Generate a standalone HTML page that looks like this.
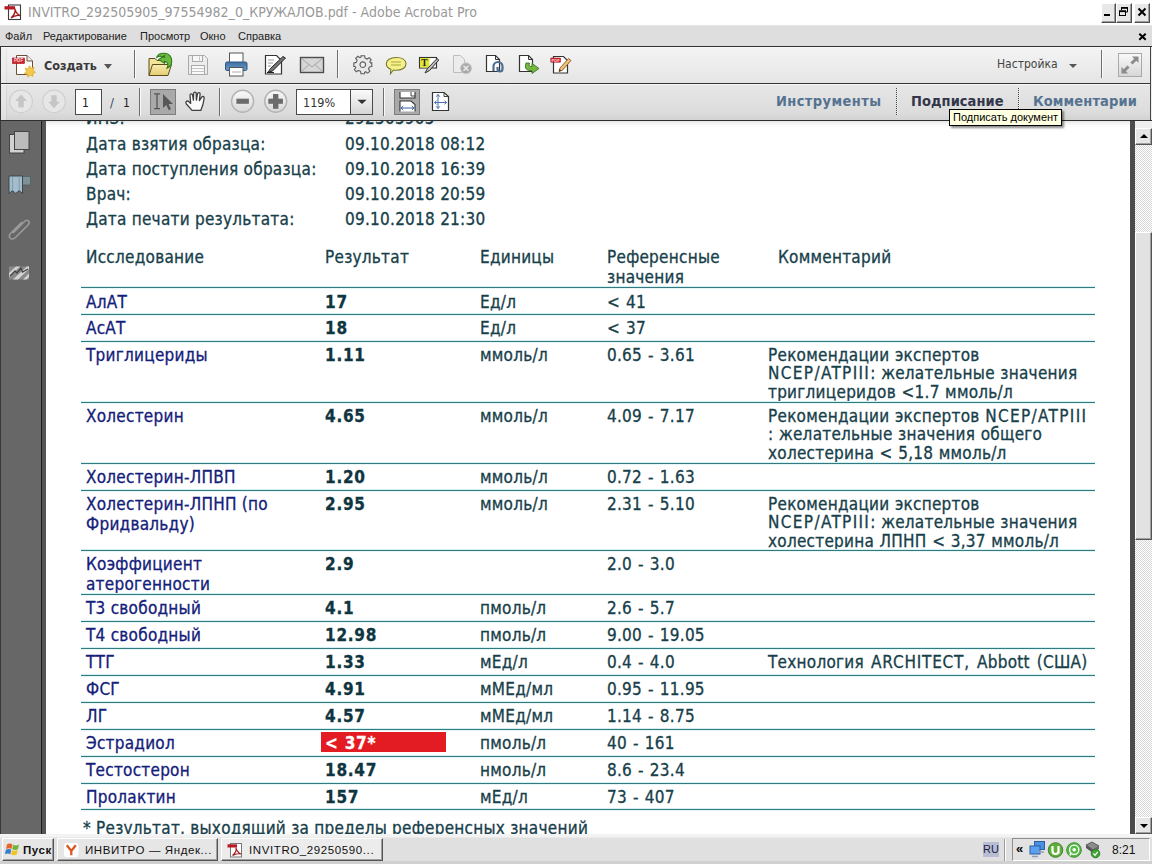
<!DOCTYPE html>
<html lang="ru">
<head>
<meta charset="utf-8">
<title>INVITRO_292505905_97554982_0_КРУЖАЛОВ.pdf - Adobe Acrobat Pro</title>
<style>
html,body{margin:0;padding:0;}
body{width:1152px;height:864px;overflow:hidden;position:relative;background:#fff;font-family:"Liberation Sans","DejaVu Sans",sans-serif;}
.abs{position:absolute;white-space:nowrap;}
#titlebar{position:absolute;left:0;top:0;width:1152px;height:25px;background:#fff;}
#title{left:28px;top:4px;font-size:14px;color:#999;font-family:"DejaVu Sans Condensed","Liberation Sans",sans-serif;}
#menubar{position:absolute;left:0;top:25px;width:1152px;height:21px;background:#dedede;border-top:1px solid #e6e6e6;box-sizing:border-box;}
.menu{font-size:11px;color:#222;top:4px;font-family:"Liberation Sans",sans-serif;}
#tb1{position:absolute;left:0;top:46px;width:1152px;height:37px;background:linear-gradient(#f4f4f4,#e5e5e5);border-top:1px solid #333;box-sizing:border-box;border-left:1px solid #333;box-shadow:inset 0 1px 0 #f8f8f8,inset 5px 0 0 rgba(255,255,255,.4),inset 6px 0 0 rgba(0,0,0,.05);}
#tb2{position:absolute;left:0;top:83px;width:1152px;height:37px;background:linear-gradient(#e7e7e7 0%,#dcdcdc 80%,#d2d2d2 100%);border-top:1px solid #333;box-sizing:border-box;border-left:1px solid #333;box-shadow:inset 0 1px 0 #f8f8f8,inset 5px 0 0 rgba(255,255,255,.4),inset 6px 0 0 rgba(0,0,0,.05);}
#docarea{position:absolute;left:0;top:120px;width:1152px;height:714px;background:#676767;border-top:1px solid #2e2e2e;box-sizing:border-box;overflow:hidden;}
#sideline{position:absolute;left:40px;top:0;width:6px;height:716px;background:linear-gradient(90deg,#6a6a6a 0 0.6px,#d4d4d4 0.6px 1.3px,#1c1c1c 1.3px 2.2px,#555 2.2px 6px);}
#page{position:absolute;left:46px;top:0px;width:1089px;height:715px;background:#fff;overflow:hidden;}
#scroll{position:absolute;left:1135px;top:0;width:17px;height:716px;background:#e9e9e9;}
#taskbar{position:absolute;left:0;top:834px;width:1152px;height:30px;background:linear-gradient(#f3f3f3 0 3px,#e0e0e0 4px 27px,#d0d0d0 27px 30px);}
.doc{font-family:"DejaVu Sans Condensed","Liberation Sans",sans-serif;font-size:17px;letter-spacing:0.25px;color:#17404a;line-height:20px;-webkit-text-stroke:0.3px currentColor;}
.nm{color:#13207a;}
.b{font-weight:bold;color:#0f3540;letter-spacing:0.75px;margin-left:0;}
.red{color:#fff;}
.rf{word-spacing:0.9px;}
.w{letter-spacing:1.35px;}
.w2{letter-spacing:0.8px;}
.cm{word-spacing:0.4px;}
.ws2{word-spacing:2px;}
.redbox{position:absolute;width:125px;height:20px;background:#e31b23;}
.hl{position:absolute;left:35px;width:1014px;height:1px;background:#347880;box-shadow:0 -1px 0 #d3f0f3,0 1px 0 #e6f7f8;}

.sep{position:absolute;width:1px;background:#6e6e6e;box-shadow:1px 0 0 #fafafa;}
.dsep{position:absolute;width:0;border-left:1px dotted #444;border-right:1px dotted #f6f6f6;}
.ico{position:absolute;overflow:visible;}
#create{left:44px;top:58px;font-size:12.5px;font-weight:bold;color:#3a3a3a;font-family:"DejaVu Sans Condensed","Liberation Sans",sans-serif;}
.tri{position:absolute;width:0;height:0;border-left:4px solid transparent;border-right:4px solid transparent;border-top:5px solid #555;}
#nastr{left:997px;top:57px;font-size:12px;color:#444;font-family:"DejaVu Sans Condensed","Liberation Sans",sans-serif;}
.pane{top:93px;font-size:14.5px;font-weight:bold;color:#557391;font-family:"DejaVu Sans Condensed","Liberation Sans",sans-serif;}
#tip{position:absolute;left:949px;top:109px;width:108px;height:15px;background:#ffffe1;border:1px solid #000;box-shadow:2px 2px 2px rgba(0,0,0,.45);font-size:11px;line-height:15px;color:#000;padding-left:3px;box-sizing:content-box;white-space:nowrap;font-family:"Liberation Sans",sans-serif;}
.inp{position:absolute;background:#fff;border:1px solid #4a4a4a;box-sizing:border-box;}
.actbtn{position:absolute;background:#a9a9a9;border:1px solid #7c7c7c;box-sizing:border-box;}
.tbt{font-size:13px;color:#222;font-family:"DejaVu Sans Condensed","Liberation Sans",sans-serif;}

.wbtn{position:absolute;top:3px;height:20px;background:#e8e8e8;box-sizing:border-box;border:1px solid;border-color:#fff #4e4e4e #4e4e4e #fff;box-shadow:inset -1px -1px 0 #9c9c9c;}

#rbar{position:absolute;left:1130px;top:0;width:5px;height:716px;background:#4c4c4c;}
#scroll{background:repeating-conic-gradient(#ffffff 0% 25%,#d6d6d6 0% 50%) 0 0/2px 2px;}
.sbtn{position:absolute;left:0;width:17px;height:17px;background:#e6e6e6;box-sizing:border-box;border:1px solid;border-color:#fff #555 #555 #fff;box-shadow:inset -1px -1px 0 #a0a0a0;}
#thumb{position:absolute;left:0;top:111px;width:17px;height:308px;background:#e2e2e2;box-sizing:border-box;border:1px solid;border-color:#fff #555 #555 #fff;box-shadow:inset -1px -1px 0 #a0a0a0;}
.arr{position:absolute;left:4px;width:0;height:0;border-left:4px solid transparent;border-right:4px solid transparent;}
.tbtn{position:absolute;top:4px;height:23px;background:#e6e6e6;box-sizing:border-box;border:1px solid;border-color:#fff #555 #555 #fff;box-shadow:inset -1px -1px 0 #a0a0a0;font-size:11.5px;letter-spacing:0.6px;color:#111;white-space:nowrap;overflow:hidden;font-family:"Liberation Sans",sans-serif;}
.tbtn span{position:absolute;top:5px;}
</style>
</head>
<body>
<div id="titlebar">
    <svg class="ico" style="left:0;top:0" width="30" height="25" viewBox="0 0 30 25">
    <rect x="8.500" y="5" width="12" height="14.500" fill="#fff" stroke="#3c3c3c" stroke-width="1.100"/>
    <path d="M11 18 C14 15.500 15.500 11.500 15 8.500 C14.800 10.500 17 14.500 20 15.500 C17 15 13.500 16 11 18 Z" fill="none" stroke="#a3161c" stroke-width="1.300"/>
    <rect x="4.500" y="6.200" width="10.500" height="3.300" fill="#b81a22"/>
  </svg>
  <div class="wbtn" style="left:1101px;width:15px"></div>
  <div class="wbtn" style="left:1116px;width:16px"></div>
  <div class="wbtn" style="left:1134px;width:16px"></div>
  <svg class="ico" style="left:1100px;top:0" width="52" height="25" viewBox="1100 0 52 25">
    <rect x="1104" y="14" width="6" height="2" fill="#000"/>
    <path d="M1121.500 10 V7.500 H1127.500 V12 H1125.500" fill="none" stroke="#000" stroke-width="1"/>
    <path d="M1121 8 H1128" stroke="#000" stroke-width="1.600"/>
    <rect x="1119.500" y="11" width="6" height="4.500" fill="none" stroke="#000" stroke-width="1"/>
    <path d="M1119 11.300 H1126" stroke="#000" stroke-width="1.600"/>
    <path d="M1138.500 8.500 L1145.500 15.500 M1145.500 8.500 L1138.500 15.500" stroke="#000" stroke-width="2"/>
  </svg>
  <div class="abs" id="title">INVITRO_292505905_97554982_0_КРУЖАЛОВ.pdf - Adobe Acrobat Pro</div>
</div>
<div id="menubar">
  <div class="abs menu" style="left:5px">Файл</div>
  <div class="abs menu" style="left:43px">Редактирование</div>
  <div class="abs menu" style="left:140px">Просмотр</div>
  <div class="abs menu" style="left:200px">Окно</div>
  <div class="abs menu" style="left:238px">Справка</div>
  <svg class="ico" style="left:1136px;top:5px" width="12" height="12" viewBox="0 0 12 12"><path d="M3.300 2.800 L9.700 8.800 M9.700 2.800 L3.300 8.800" stroke="#000" stroke-width="2"/></svg>
</div>
<div id="tb1"></div>
<div id="tb2"></div>
<div id="docarea">
  <svg class="ico" style="left:0;top:0" width="46" height="180" viewBox="0 120 46 180">
    <rect x="9.500" y="133.500" width="14.500" height="18.500" fill="#d2d2d2" stroke="#444" stroke-width="1"/>
    <rect x="14.500" y="130.500" width="14.500" height="18" fill="#bcbcbc" stroke="#444" stroke-width="1"/>
    <path d="M20 175.500 H30.500 V184 H20 Z" fill="#7d9294" stroke="#4f5f62" stroke-width="0.800"/>
    <path d="M9 175 H22.500 V192.500 L19.200 189.500 L15.800 192.500 L12.400 189.500 L9 192.500 Z" fill="#a4bccb" stroke="#2f3e4c" stroke-width="0.900"/>
    <path d="M12.600 176 V189.500 M19.200 176 V189.500" stroke="#7f95a6" stroke-width="0.900"/>
    <path d="M13 232 L24.500 220.500 C27.500 217.500 31 221 28 224 L15.500 236.500 C11.500 240.500 7 236 11 232 L22 221" fill="none" stroke="#9a9a9a" stroke-width="1.600"/>
    <path d="M9 265.500 H29 V278.500 H9 Z" fill="#8a8a8a"/>
    <path d="M9 272 L16 265.500 H20 L9 276 Z M13 278.500 L27 265.500 H29 V268 L18 278.500 Z M23 278.500 L29 272.500 V276 L26.500 278.500 Z" fill="#d4d4d4"/>
    <path d="M10 275 L15 270 L17 272 L21 267 L22.500 271 L28 268" fill="none" stroke="#444" stroke-width="1.300"/>
  </svg>
  <div style="position:absolute;left:0;top:0;width:1px;height:716px;background:#3a3a3a"></div>
  <div id="sideline"></div>
  <div id="page">
<div style="position:absolute;left:0;top:0;width:1089px;height:6px;background:linear-gradient(#e6e6e6,#f4f4f4 40%,#fff)"></div>
<div class="abs doc" style="left:40px;top:-13px">ИНЗ:</div>
<div class="abs doc" style="left:299px;top:-13px">292505905</div>
<div class="abs doc" style="left:40px;top:13px">Дата взятия образца:</div>
<div class="abs doc" style="left:299px;top:13px">09.10.2018 08:12</div>
<div class="abs doc" style="left:40px;top:38px">Дата поступления образца:</div>
<div class="abs doc" style="left:299px;top:38px">09.10.2018 16:39</div>
<div class="abs doc" style="left:40px;top:63px">Врач:</div>
<div class="abs doc" style="left:299px;top:63px">09.10.2018 20:59</div>
<div class="abs doc" style="left:40px;top:88px">Дата печати результата:</div>
<div class="abs doc" style="left:299px;top:88px">09.10.2018 21:30</div>
<div class="abs doc" style="left:40px;top:126px">Исследование</div>
<div class="abs doc" style="left:279px;top:126px">Результат</div>
<div class="abs doc" style="left:434px;top:126px">Единицы</div>
<div class="abs doc" style="left:561px;top:126px">Референсные</div>
<div class="abs doc" style="left:561px;top:146px">значения</div>
<div class="abs doc" style="left:732px;top:126px">Комментарий</div>
<div class="hl" style="top:166px"></div>
<div class="abs doc nm" style="left:40px;top:171px">АлАТ</div>
<div class="abs doc b" style="left:279px;top:171px">17</div>
<div class="abs doc" style="left:434px;top:171px">Ед/л</div>
<div class="abs doc rf" style="left:561px;top:171px">&lt; 41</div>
<div class="hl" style="top:193px"></div>
<div class="abs doc nm" style="left:40px;top:197px">АсАТ</div>
<div class="abs doc b" style="left:279px;top:197px">18</div>
<div class="abs doc" style="left:434px;top:197px">Ед/л</div>
<div class="abs doc rf" style="left:561px;top:197px">&lt; 37</div>
<div class="hl" style="top:220px"></div>
<div class="abs doc nm" style="left:40px;top:224px">Триглицериды</div>
<div class="abs doc b" style="left:279px;top:224px">1.11</div>
<div class="abs doc" style="left:434px;top:224px">ммоль/л</div>
<div class="abs doc rf" style="left:561px;top:224px">0.65 - 3.61</div>
<div class="abs doc cm" style="left:722px;top:224px">Рекомендации экспертов</div>
<div class="abs doc cm" style="left:722px;top:242.3px"><span class="w">NCEP/ATPIII</span>: желательные значения</div>
<div class="abs doc cm" style="left:722px;top:260.6px">триглицеридов &lt;1.7 ммоль/л</div>
<div class="hl" style="top:281px"></div>
<div class="abs doc nm" style="left:40px;top:285px">Холестерин</div>
<div class="abs doc b" style="left:279px;top:285px">4.65</div>
<div class="abs doc" style="left:434px;top:285px">ммоль/л</div>
<div class="abs doc rf" style="left:561px;top:285px">4.09 - 7.17</div>
<div class="abs doc cm" style="left:722px;top:285px">Рекомендации экспертов <span class="w">NCEP/ATPIII</span></div>
<div class="abs doc cm" style="left:722px;top:303.3px">: желательные значения общего</div>
<div class="abs doc cm" style="left:722px;top:321.6px">холестерина &lt; 5,18 ммоль/л</div>
<div class="hl" style="top:342px"></div>
<div class="abs doc nm" style="left:40px;top:346px">Холестерин-ЛПВП</div>
<div class="abs doc b" style="left:279px;top:346px">1.20</div>
<div class="abs doc" style="left:434px;top:346px">ммоль/л</div>
<div class="abs doc rf" style="left:561px;top:346px">0.72 - 1.63</div>
<div class="hl" style="top:369px"></div>
<div class="abs doc nm" style="left:40px;top:373px">Холестерин-ЛПНП (по</div>
<div class="abs doc nm" style="left:40px;top:393px">Фридвальду)</div>
<div class="abs doc b" style="left:279px;top:373px">2.95</div>
<div class="abs doc" style="left:434px;top:373px">ммоль/л</div>
<div class="abs doc rf" style="left:561px;top:373px">2.31 - 5.10</div>
<div class="abs doc cm" style="left:722px;top:373px">Рекомендации экспертов</div>
<div class="abs doc cm" style="left:722px;top:391.3px"><span class="w">NCEP/ATPIII</span>: желательные значения</div>
<div class="abs doc cm" style="left:722px;top:409.6px">холестерина ЛПНП &lt; 3,37 ммоль/л</div>
<div class="hl" style="top:429px"></div>
<div class="abs doc nm" style="left:40px;top:433px">Коэффициент</div>
<div class="abs doc nm" style="left:40px;top:453px">атерогенности</div>
<div class="abs doc b" style="left:279px;top:433px">2.9</div>
<div class="abs doc rf" style="left:561px;top:433px">2.0 - 3.0</div>
<div class="hl" style="top:473px"></div>
<div class="abs doc nm" style="left:40px;top:477px">Т3 свободный</div>
<div class="abs doc b" style="left:279px;top:477px">4.1</div>
<div class="abs doc" style="left:434px;top:477px">пмоль/л</div>
<div class="abs doc rf" style="left:561px;top:477px">2.6 - 5.7</div>
<div class="hl" style="top:500px"></div>
<div class="abs doc nm" style="left:40px;top:504px">Т4 свободный</div>
<div class="abs doc b" style="left:279px;top:504px">12.98</div>
<div class="abs doc" style="left:434px;top:504px">пмоль/л</div>
<div class="abs doc rf" style="left:561px;top:504px">9.00 - 19.05</div>
<div class="hl" style="top:527px"></div>
<div class="abs doc nm" style="left:40px;top:531px">ТТГ</div>
<div class="abs doc b" style="left:279px;top:531px">1.33</div>
<div class="abs doc" style="left:434px;top:531px">мЕд/л</div>
<div class="abs doc rf" style="left:561px;top:531px">0.4 - 4.0</div>
<div class="abs doc cm ws2" style="left:722px;top:531px">Технология <span class="w2">ARCHITECT,</span> Abbott (США)</div>
<div class="hl" style="top:554px"></div>
<div class="abs doc nm" style="left:40px;top:558px">ФСГ</div>
<div class="abs doc b" style="left:279px;top:558px">4.91</div>
<div class="abs doc" style="left:434px;top:558px">мМЕд/мл</div>
<div class="abs doc rf" style="left:561px;top:558px">0.95 - 11.95</div>
<div class="hl" style="top:581px"></div>
<div class="abs doc nm" style="left:40px;top:585px">ЛГ</div>
<div class="abs doc b" style="left:279px;top:585px">4.57</div>
<div class="abs doc" style="left:434px;top:585px">мМЕд/мл</div>
<div class="abs doc rf" style="left:561px;top:585px">1.14 - 8.75</div>
<div class="hl" style="top:608px"></div>
<div class="abs doc nm" style="left:40px;top:612px">Эстрадиол</div>
<div class="redbox" style="left:275px;top:611px"></div>
<div class="abs doc b red" style="left:279px;top:612px">&lt; 37*</div>
<div class="abs doc" style="left:434px;top:612px">пмоль/л</div>
<div class="abs doc rf" style="left:561px;top:612px">40 - 161</div>
<div class="hl" style="top:635px"></div>
<div class="abs doc nm" style="left:40px;top:639px">Тестостерон</div>
<div class="abs doc b" style="left:279px;top:639px">18.47</div>
<div class="abs doc" style="left:434px;top:639px">нмоль/л</div>
<div class="abs doc rf" style="left:561px;top:639px">8.6 - 23.4</div>
<div class="hl" style="top:662px"></div>
<div class="abs doc nm" style="left:40px;top:666px">Пролактин</div>
<div class="abs doc b" style="left:279px;top:666px">157</div>
<div class="abs doc" style="left:434px;top:666px">мЕд/л</div>
<div class="abs doc rf" style="left:561px;top:666px">73 - 407</div>
<div class="hl" style="top:688px"></div>
<div class="abs doc" style="left:37px;top:697px">* Результат, выходящий за пределы референсных значений</div>
</div>
  <div id="rbar"></div>
  <div id="scroll">
    <div style="position:absolute;left:0;top:0;width:17px;height:7px;background:#efefef"></div>
    <div class="sbtn" style="top:7px"><div class="arr" style="top:5px;border-bottom:4px solid #000"></div></div>
    <div id="thumb"></div>
    <div class="sbtn" style="top:696px"><div class="arr" style="top:6px;border-top:4px solid #000"></div></div>
  </div>
</div>
<div id="taskbar">
  <div class="tbtn" style="left:2px;width:52px;font-weight:bold"><span style="left:20px">Пуск</span>
    <svg class="ico" style="left:2px;top:2px" width="16" height="16" viewBox="0 0 16 16">
      <path d="M2 3.500 C4 2 6 2.500 7.500 3.500 L6.500 8 C5 7 3 6.800 1 8 Z" fill="#e8632a"/>
      <path d="M8.300 3.800 C10 4.800 12 4.800 14 3.500 L13 8 C11 9.300 9 9 7.300 8.300 Z" fill="#6fb536"/>
      <path d="M0.800 8.800 C3 7.600 5 8 6.300 8.800 L5.300 13.300 C4 12.300 2 12.200 0 13.300 Z" fill="#3a7cc4"/>
      <path d="M7.100 9.200 C9 10 11 10 12.800 8.800 L11.800 13.300 C10 14.500 8 14.300 6.100 13.600 Z" fill="#f0c424"/>
    </svg>
  </div>
  <div class="tbtn" style="left:57px;width:161px"><span style="left:27px">ИНВИТРО — Яндек...</span>
    <svg class="ico" style="left:5px;top:3px" width="17" height="16" viewBox="0 0 17 16">
      <rect x="0.500" y="0.500" width="15.500" height="15" rx="3" fill="#fff" stroke="#e4e4ec" stroke-width="1"/>
      <path d="M3.800 3.300 L8.300 9 L12.800 3.300 M8.300 9 V13.300" fill="none" stroke="#dd5522" stroke-width="2.300"/>
    </svg>
  </div>
  <div class="tbtn" style="left:221px;width:162px;background:#ececec"><span style="left:27px">INVITRO_29250590...</span>
    <svg class="ico" style="left:4px;top:2px" width="18" height="18" viewBox="0 0 18 18">
      <rect x="4.500" y="2.500" width="11" height="13.500" fill="#fff" stroke="#777" stroke-width="1"/>
      <path d="M6.500 14.500 C9 12.500 10.500 9 10 6.500 C10 8.500 12 12 15 13 C12.500 12.500 9 13 6.500 14.500 Z" fill="none" stroke="#a3161c" stroke-width="1.100"/>
      <rect x="1.500" y="3.300" width="9.500" height="3.200" fill="#b81a22"/>
    </svg>
  </div>
  <div style="position:absolute;left:983px;top:8px;width:16px;height:15px;background:#b9bdd2;font-size:11px;line-height:15px;text-align:center;color:#1a1f4a;font-family:'Liberation Sans',sans-serif">RU</div>
  <div style="position:absolute;left:1004px;top:5px;width:1px;height:22px;background:#9a9a9a;box-shadow:1px 0 0 #fff"></div>
  <div style="position:absolute;left:1012px;top:4px;width:138px;height:23px;box-sizing:border-box;border:1px solid;border-color:#8e8e8e #fff #fff #8e8e8e;background:#e2e2e2"></div>
  <div class="abs" style="left:1016px;top:7px;font-size:13px;font-weight:bold;color:#000;font-family:'Liberation Sans',sans-serif">«</div>
  <svg class="ico" style="left:1028px;top:5px" width="76" height="20" viewBox="1028 839 76 20">
    <!-- network -->
    <rect x="1034.500" y="841.500" width="10" height="8" fill="#4a8fe0" stroke="#2a5fa8" stroke-width="1"/>
    <rect x="1030" y="846" width="10" height="8" fill="#5aa0ee" stroke="#2a5fa8" stroke-width="1"/>
    <path d="M1032 856.500 H1038 M1038 852 H1044" stroke="#8fa0b4" stroke-width="1.500"/>
    <!-- utorrent -->
    <circle cx="1055.500" cy="850" r="7.300" fill="#5fae3c" stroke="#3e8526" stroke-width="1"/>
    <path d="M1052.500 846 V851 C1052.500 855 1058.500 855 1058.500 851 V846 M1058.500 853.500 V851" fill="none" stroke="#fff" stroke-width="2.200"/>
    <!-- whatsapp -->
    <circle cx="1074" cy="850" r="7.300" fill="#58b845" stroke="#3e8f2e" stroke-width="1"/>
    <circle cx="1074.200" cy="849.700" r="4.600" fill="none" stroke="#fff" stroke-width="1.300"/>
    <path d="M1070 855.500 L1071 852.500" stroke="#fff" stroke-width="1.500"/>
    <circle cx="1074.200" cy="849.700" r="1.800" fill="#fff"/>
    <!-- safely remove -->
    <path d="M1086 845 L1092 842 L1099 846 L1093 850 Z" fill="#8c8c8c" stroke="#444" stroke-width="0.800"/>
    <path d="M1086 845 V848 L1093 853 V850 Z" fill="#555"/>
    <path d="M1093 850 L1099 846 V849 L1093 853 Z" fill="#6e6e6e"/>
    <circle cx="1095.500" cy="853.500" r="4.300" fill="#3fa535" stroke="#24701e" stroke-width="0.800"/>
    <path d="M1093.500 853.500 L1095 855.300 L1097.700 851.800" fill="none" stroke="#fff" stroke-width="1.300"/>
  </svg>
  <div class="abs" style="left:1112px;top:9px;font-size:12px;color:#111;font-family:'Liberation Sans',sans-serif">8:21</div>
</div>
<div id="ui">
<!-- toolbar 1 -->
<div class="abs" id="create">Создать</div>
<div class="tri" style="left:104px;top:64px"></div>
<div class="sep" style="left:134px;top:50px;height:28px"></div>
<div class="sep" style="left:337px;top:50px;height:28px"></div>
<div class="abs" id="nastr">Настройка</div>
<div class="tri" style="left:1069px;top:64px;border-left-width:4px;border-right-width:4px;border-top-width:4px"></div>
<div class="sep" style="left:1101px;top:50px;height:28px"></div>
<!-- toolbar 2 -->
<div class="inp" style="left:75px;top:89px;width:27px;height:26px"></div>
<div class="abs tbt" style="left:82px;top:96px;font-size:12px">1</div>
<div class="abs tbt" style="left:110px;top:95px;color:#446">/</div>
<div class="abs tbt" style="left:123px;top:96px;font-size:12px">1</div>
<div class="sep" style="left:139px;top:88px;height:28px"></div>
<div class="actbtn" style="left:150px;top:89px;width:26px;height:26px"></div>
<div class="sep" style="left:219px;top:88px;height:28px"></div>
<div class="inp" style="left:296px;top:89px;width:77px;height:26px"></div>
<div class="abs tbt" style="left:303px;top:95px;font-size:12.5px;color:#333">119%</div>
<div class="sep" style="left:383px;top:88px;height:28px"></div>
<div class="actbtn" style="left:394px;top:89px;width:26px;height:26px"></div>
<div class="abs pane" style="left:776px;letter-spacing:0.4px">Инструменты</div>
<div class="dsep" style="left:896px;top:88px;height:27px"></div>
<div class="abs pane" style="left:911px;color:#33364a;letter-spacing:0.05px">Подписание</div>
<div class="dsep" style="left:1018px;top:88px;height:27px"></div>
<div class="abs pane" style="left:1033px;letter-spacing:0.1px">Комментарии</div>
<!--ICONS-->
<svg class="ico" style="left:0;top:0" width="1152" height="130" viewBox="0 0 1152 130">
<defs>
<linearGradient id="gbtn" x1="0" y1="0" x2="0" y2="1"><stop offset="0" stop-color="#fafafa"/><stop offset="1" stop-color="#d6d6d6"/></linearGradient>
<linearGradient id="gfold" x1="0" y1="0" x2="0" y2="1"><stop offset="0" stop-color="#f8ecb0"/><stop offset="1" stop-color="#e4cc70"/></linearGradient>
<linearGradient id="gblue" x1="0" y1="0" x2="0" y2="1"><stop offset="0" stop-color="#3f6f9f"/><stop offset="1" stop-color="#6a9ccc"/></linearGradient>
</defs>
<!-- create icon -->
<g>
<path d="M16.5 55.5 H27 L32.5 61 V74.5 H16.5 Z" fill="#fff" stroke="#6b4f3a" stroke-width="1"/>
<path d="M27 55.5 V61 H32.5" fill="#eee" stroke="#6b4f3a" stroke-width="1"/>
<rect x="12.5" y="58" width="12" height="5.5" fill="#d2232a" stroke="#a01018" stroke-width="0.6"/>
<text x="14" y="62.400" font-family="Liberation Sans,sans-serif" font-weight="bold" font-size="4.600" fill="#f6d4d4">PDF</text>
<path d="M29.5 65.5 l1.6 2.6 3 -0.6 -0.8 3 2.4 1.9 -2.8 1.2 0.1 3 -2.8 -1.3 -2.3 2 -0.6 -3 -3 -0.8 2 -2.3 -1.2 -2.8 3 0.3z" fill="#f2c94c" stroke="#d9a520" stroke-width="0.6"/>
</g>
<!-- open folder -->
<g>
<path d="M149 75.5 V58.5 H155 L157 60.5 H164 V63" fill="#f3e29a" stroke="#5c4b1e" stroke-width="1"/>
<path d="M149 75.5 L152.5 64.5 H171.5 L168 75.5 Z" fill="url(#gfold)" stroke="#5c4b1e" stroke-width="1"/>
<path d="M156.800 57.200 C158.500 52.300 168.500 51.300 171.200 58 C173 63 170.800 67 167 68.300 C168.800 64.500 168 61.800 164.500 61.300 L164.500 63.300 L158.800 59.600 L164.500 55.600 L164.500 57.400 C161 55.800 158.500 56.200 156.800 57.200 Z" fill="#6dbb3e" stroke="#2f7a1e" stroke-width="1.100"/>
</g>
<!-- floppy disabled -->
<g fill="none" stroke="#a9a9a9" stroke-width="1">
<path d="M188.500 55.500 H204.500 L207.500 58.500 V74.500 H188.500 Z" fill="#ececec"/>
<rect x="192.500" y="55.500" width="10" height="6" fill="#f6f6f6"/>
<rect x="191.500" y="65.500" width="13" height="9" fill="#f9f9f9"/>
<path d="M199.500 56.500 V60.500 M192 68.500 H204 M192 71.500 H204" stroke="#c4c4c4"/>
</g>
<!-- printer -->
<g>
<rect x="229.500" y="53" width="13.500" height="9.500" fill="#fdfdfd" stroke="#555" stroke-width="1"/>
<rect x="225.500" y="62" width="21.500" height="8.500" rx="1.500" fill="url(#gblue)" stroke="#2f5884" stroke-width="1"/>
<rect x="229.500" y="67.500" width="13.500" height="8.500" fill="#fff" stroke="#555" stroke-width="1"/>
<path d="M232 72 H241" stroke="#aaa" stroke-width="1"/>
</g>
<!-- edit page -->
<g>
<path d="M265.500 55.500 H276.500 L281.500 60.500 V74 H265.500 Z" fill="#fff" stroke="#333" stroke-width="1.200"/>
<path d="M268 60 H274 M268 63 H273 M268 66 H271" stroke="#999" stroke-width="1"/>
<path d="M285.500 58 L283 56.500 L270.500 68.500 L268 72.500 L272.500 71 Z" fill="#777" stroke="#222" stroke-width="1"/>
<path d="M267 72.500 H274" stroke="#222" stroke-width="1.200"/>
</g>
<!-- envelope -->
<g>
<rect x="300.500" y="57.500" width="23" height="15" fill="#d6d6d6" stroke="#4c4c4c" stroke-width="1.400"/>
<path d="M301.500 58.500 L312 67 L322.500 58.500 M301.500 71.500 L309 64.500 M322.500 71.500 L315 64.500" fill="none" stroke="#a4a4a4" stroke-width="1"/>
</g>
<!-- gear -->
<g transform="translate(362.800 64.700)">
<path id="gearp" d="M-1.800 -9 H1.800 L2.300 -6.600 L4.300 -5.700 L6.400 -7.100 L8.400 -4.900 L7 -2.900 L7.700 -1.800 L9 -1.800 V1.800 L6.600 2.300 L5.700 4.300 L7.100 6.400 L4.900 8.400 L2.900 7 L1.800 7.700 V9 H-1.800 L-2.300 6.600 L-4.300 5.700 L-6.400 7.100 L-8.400 4.900 L-7 2.900 L-7.700 1.800 H-9 V-1.800 L-6.600 -2.300 L-5.700 -4.300 L-7.100 -6.400 L-4.900 -8.400 L-2.900 -7 L-1.800 -7.700 Z" fill="#e9e9e9" stroke="#5e5e5e" stroke-width="1.100"/>
<circle r="2.800" fill="#efefef" stroke="#5e5e5e" stroke-width="1.100"/>
</g>
<!-- comment bubble -->
<g>
<path d="M396 57.500 C402 57.500 406 60 406 63.800 C406 67.600 402 70.200 396 70.200 C395 70.200 394.200 70.100 393.400 70 L390.500 73.800 L390.800 69.300 C388 68.200 386.300 66.200 386.300 63.800 C386.300 60 390.500 57.500 396 57.500 Z" fill="#f5f08a" stroke="#77782a" stroke-width="1.100"/>
<path d="M391 62 H401 M391 65 H401" stroke="#a7a63a" stroke-width="1.100"/>
</g>
<!-- T highlight -->
<g>
<rect x="419.500" y="57.500" width="17" height="10.500" fill="#fff" stroke="#333" stroke-width="1.100"/>
<rect x="420" y="58" width="9.500" height="9.500" fill="#e3e43a"/>
<text x="421.300" y="66.300" font-family="Liberation Serif,serif" font-weight="bold" font-size="9.500" fill="#222">T</text>
<path d="M438.800 60 L437 58.600 L427.500 68.500 L425 73 L429.600 70.500 Z" fill="#bbb" stroke="#333" stroke-width="1"/>
</g>
<!-- page x disabled -->
<g>
<path d="M453.500 55.500 H460.500 L464.500 59.500 V72.500 H453.500 Z" fill="#ececec" stroke="#bdbdbd" stroke-width="1"/>
<circle cx="466" cy="68.300" r="5.500" fill="#a9a9a9" stroke="#c9c9c9" stroke-width="1"/>
<path d="M463.500 65.800 L468.500 70.800 M468.500 65.800 L463.500 70.800" stroke="#e9e9e9" stroke-width="1.600"/>
</g>
<!-- page rotate -->
<g>
<path d="M486.500 55.500 H495.500 L499.500 59.500 V71.500 H486.500 Z" fill="#fff" stroke="#333" stroke-width="1.200"/>
<path d="M495.500 55.500 V59.500 H499.500" fill="none" stroke="#333" stroke-width="1"/>
<path d="M493.500 71 V66.500 A4.500 4.500 0 0 1 502.500 66.500 V69 A2.500 2.500 0 0 1 497.500 69 V67" fill="none" stroke="#4a6f92" stroke-width="2.200"/>
</g>
<!-- page green arrow -->
<g>
<path d="M519.500 55.500 H528.500 L532.500 59.500 V71.500 H519.500 Z" fill="#fff" stroke="#333" stroke-width="1.200"/>
<path d="M528.500 55.500 V59.500 H532.500" fill="none" stroke="#333" stroke-width="1"/>
<path d="M526 63 C524 69 527 71 532 70.500 L532 73.500 L539 68.500 L532 63.500 L532 66.500 C529.500 66.800 528.500 66 529.500 63 Z" fill="#74b843" stroke="#3d7420" stroke-width="0.900"/>
</g>
<!-- pdf pencil -->
<g>
<path d="M553.500 56.500 H563.500 L567.500 60.500 V73 H553.500 Z" fill="#fff" stroke="#333" stroke-width="1.200"/>
<rect x="550.800" y="58" width="9.800" height="4.200" fill="#d2232a" stroke="#a01018" stroke-width="0.500"/>
<text x="551.600" y="61.600" font-family="Liberation Sans,sans-serif" font-weight="bold" font-size="4" fill="#f6d4d4">PDF</text>
<path d="M571 60.500 L568.500 58.500 L560 68 L559 71.500 L562.500 70.200 Z" fill="#eebf7a" stroke="#8a5a20" stroke-width="0.900"/>
<path d="M559 71.500 L559.600 69.300 L561.200 70.700 Z" fill="#222"/>
</g>
<!-- fullscreen button -->
<g>
<rect x="1118.500" y="53.500" width="23" height="23" fill="url(#gbtn)" stroke="#a9a9a9" stroke-width="1"/>
<path d="M1138.500 56.500 V63 L1136.300 60.800 L1132.500 64.600 L1130.400 62.500 L1134.200 58.700 L1132 56.500 Z" fill="#8b8b8b"/>
<path d="M1121.500 73.500 V67 L1123.700 69.200 L1127.500 65.400 L1129.600 67.500 L1125.800 71.300 L1128 73.500 Z" fill="#8b8b8b"/>
</g>
<!-- up / down disabled -->
<g>
<circle cx="21.100" cy="101.400" r="11.300" fill="#e6e6e6" stroke="#cfcfcf" stroke-width="1.200"/>
<path d="M21.100 94.500 L27 101 H23.800 V107.500 H18.400 V101 H15.200 Z" fill="#c6c6c6"/>
<circle cx="54" cy="101.400" r="11.300" fill="#e6e6e6" stroke="#cfcfcf" stroke-width="1.200"/>
<path d="M54 108.300 L59.900 101.800 H56.700 V95.300 H51.300 V101.800 H48.100 Z" fill="#c6c6c6"/>
</g>
<!-- select tool (on active button) -->
<g>
<path d="M154 93.800 H160 M154 108.700 H160 M157 93.800 V108.700" stroke="#555" stroke-width="1.300" fill="none"/>
<path d="M163 94 V108 L166.300 105 L168.800 110.200 L171 109.200 L168.600 104 H173 Z" fill="#585858"/>
</g>
<!-- hand -->
<g>
<path d="M192.100 110.400 L186.400 104 C185 102.200 186.600 100.400 188.400 101.300 L190.700 103.400 L190 95.600 C189.900 93.500 192.300 93.300 192.600 95.300 L193.400 100.200 L193.600 93.600 C193.700 91.500 196.200 91.500 196.200 93.600 L196.400 100.200 L197.500 93.900 C197.900 91.900 200.400 92.300 200.100 94.300 L199.400 100.600 L201.600 97.300 C202.700 95.600 204.700 96.600 204.100 98.500 C203.700 102 203.400 104.500 200.800 110.400 Z" fill="#fbfbfb" stroke="#3f3f3f" stroke-width="1.300" stroke-linejoin="round"/>
</g>
<!-- minus / plus -->
<g>
<circle cx="242.600" cy="101.300" r="11" fill="url(#gbtn)" stroke="#b4b4b4" stroke-width="1.400"/>
<rect x="236.400" y="98.700" width="12.500" height="5.100" fill="#6b6b6b"/>
<circle cx="275.700" cy="101.300" r="11" fill="url(#gbtn)" stroke="#b4b4b4" stroke-width="1.400"/>
<rect x="268.300" y="98.700" width="14.600" height="5.100" fill="#6b6b6b"/>
<rect x="273" y="94" width="5.400" height="14.800" fill="#6b6b6b"/>
</g>
<!-- zoom dropdown -->
<g>
<rect x="350.500" y="90" width="21.500" height="24" fill="url(#gbtn)"/>
<path d="M350.500 90 V114" stroke="#4a4a4a" stroke-width="1"/>
<path d="M357.300 99.800 H366.700 L362 104 Z" fill="#333"/>
</g>
<!-- fit width (active) -->
<g>
<path d="M400 92 V98 H415 V92" fill="#fff" stroke="#333" stroke-width="1.100"/>
<path d="M411 92 V96 H415" fill="none" stroke="#333" stroke-width="0.900"/>
<path d="M400 111.500 V101 H411 L415 104.500 V111.500" fill="#fff" stroke="#333" stroke-width="1.100"/>
<path d="M401 108 H414 M401 108 l2.200 -2 M401 108 l2.200 2 M414 108 l-2.200 -2 M414 108 l-2.200 2" stroke="#3c5fa8" stroke-width="1" fill="none"/>
</g>
<!-- fit page -->
<g>
<path d="M432.500 92.500 H444 L448.500 96.500 V110.500 H432.500 Z" fill="#fff" stroke="#333" stroke-width="1.200"/>
<path d="M444 92.500 V96.500 H448.500" fill="none" stroke="#333" stroke-width="0.900"/>
<path d="M438 94.500 V108.500 M438 94.500 l-1.800 2.200 M438 94.500 l1.800 2.200 M438 108.500 l-1.800 -2.200 M438 108.500 l1.800 -2.200 M434.500 102.500 H446.500 M434.500 102.500 l2 -1.800 M434.500 102.500 l2 1.800 M446.500 102.500 l-2 -1.800 M446.500 102.500 l-2 1.800" stroke="#4a6fb4" stroke-width="1" fill="none"/>
</g>
</svg>
<!--/ICONS-->
<div style="position:absolute;left:1150px;top:47px;width:1px;height:73px;background:#444"></div>
<div style="position:absolute;left:1151px;top:47px;width:1px;height:73px;background:#eee"></div>
<div id="tip">Подписать документ</div>
</div>

</body>
</html>
